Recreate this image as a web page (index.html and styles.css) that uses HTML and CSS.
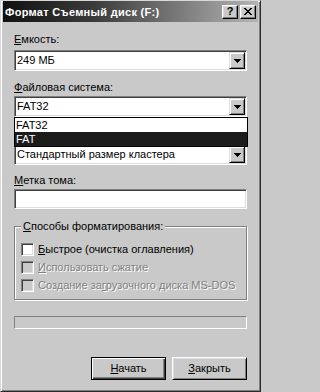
FILE: index.html
```html
<!DOCTYPE html>
<html lang="ru">
<head>
<meta charset="utf-8">
<title>Формат Съемный диск (F:)</title>
<link rel="stylesheet" href="styles.css">
</head>
<body>
<div class="window">
  <div class="titlebar">
    <span class="title">Формат Съемный диск (F:)</span>
    <div class="caption-buttons">
      <div class="cap-btn help">?</div>
      <div class="cap-btn close">
        <svg width="8" height="7" viewBox="0 0 8 7" shape-rendering="crispEdges"><path d="M0 0h2v1H0zM6 0h2v1H6zM1 1h2v1H1zM5 1h2v1H5zM2 2h4v1H2zM3 3h2v1H3zM2 4h4v1H2zM1 5h2v1H1zM5 5h2v1H5zM0 6h2v1H0zM6 6h2v1H6z"/></svg>
      </div>
    </div>
  </div>
  <div class="content">
    <div class="label l1"><u>Е</u>мкость:</div>
    <div class="combo c1">
      <span class="combo-text">249 МБ</span>
      <span class="drop"><svg width="7" height="4" viewBox="0 0 7 4" shape-rendering="crispEdges"><path d="M0 0h7v1H0zM1 1h5v1H1zM2 2h3v1H2zM3 3h1v1H3z"/></svg></span>
    </div>
    <div class="label l2"><u>Ф</u>айловая система:</div>
    <div class="combo-wrap">
      <div class="combo c2">
        <span class="combo-text">FAT32</span>
        <span class="drop"><svg width="7" height="4" viewBox="0 0 7 4" shape-rendering="crispEdges"><path d="M0 0h7v1H0zM1 1h5v1H1zM2 2h3v1H2zM3 3h1v1H3z"/></svg></span>
      </div>
      <div class="dropdown-list">
        <div class="item">FAT32</div>
        <div class="item selected">FAT</div>
      </div>
    </div>
    <div class="label-spacer"></div>
    <div class="combo c3">
      <span class="combo-text">Стандартный размер кластера</span>
      <span class="drop"><svg width="7" height="4" viewBox="0 0 7 4" shape-rendering="crispEdges"><path d="M0 0h7v1H0zM1 1h5v1H1zM2 2h3v1H2zM3 3h1v1H3z"/></svg></span>
    </div>
    <div class="label l4"><u>М</u>етка тома:</div>
    <div class="textbox"></div>
    <fieldset class="group">
      <legend><u>С</u>пособы форматирования:</legend>
      <div class="check-row"><span class="checkbox"></span><span class="check-label"><u>Б</u>ыстрое (очистка оглавления)</span></div>
      <div class="check-row disabled"><span class="checkbox"></span><span class="check-label"><u>И</u>спользовать сжатие</span></div>
      <div class="check-row disabled"><span class="checkbox"></span><span class="check-label">Создание за<u>г</u>рузочного диска MS-DOS</span></div>
    </fieldset>
    <div class="progress"></div>
    <div class="buttons">
      <div class="btn default"><u>Н</u>ачать</div>
      <div class="btn"><u>З</u>акрыть</div>
    </div>
  </div>
</div>
</body>
</html>
```

FILE: styles.css
```css
* { box-sizing: border-box; }
html, body { margin: 0; padding: 0; }
body {
  width: 261px;
  height: 392px;
  overflow: hidden;
  background: #c9c9c9;
  font-family: "Liberation Sans", Arial, sans-serif;
  font-size: 11px;
  color: #000;
}
u { text-decoration: underline; text-underline-offset: 1px; }

.window {
  width: 261px;
  height: 392px;
  display: flex;
  flex-direction: column;
  background: #c9c9c9;
  border: 1px solid;
  border-color: #d8d8d8 #2a2a2a #2a2a2a #d8d8d8;
  padding: 0 2px 2px 2px;
  box-shadow: inset 1px 1px #fff, inset -1px -1px #808080;
}

.titlebar {
  height: 21px;
  flex: none;
  display: flex;
  align-items: center;
  justify-content: space-between;
  padding: 0 2px;
  background: linear-gradient(to right, #111 0%, #3a3a3a 35%, #b4b4b4 100%);
}
.title {
  color: #fff;
  font-weight: bold;
  font-size: 11px;
  letter-spacing: 0.3px;
  line-height: 13px;
  padding-top: 1px;
  white-space: nowrap;
}
.caption-buttons { display: flex; gap: 2px; }
.cap-btn {
  width: 16px;
  height: 14px;
  display: flex;
  align-items: center;
  justify-content: center;
  background: #c9c9c9;
  border: 1px solid;
  border-color: #fff #000 #000 #fff;
  box-shadow: inset -1px -1px #808080, inset 1px 1px #dcdcdc;
}
.cap-btn.help {
  font-weight: bold;
  font-size: 11px;
  line-height: 11px;
}

.content {
  flex: 1;
  display: flex;
  flex-direction: column;
  padding: 0 11px;
}

.label { line-height: 13px; white-space: nowrap; }
.l1 { margin-top: 11px; }
.l2 { margin-top: 10px; }
.label-spacer { height: 13px; margin-top: 10px; }
.l4 { margin-top: 9px; }

.combo {
  height: 21px;
  display: flex;
  align-items: center;
  background: #fff;
  border: 1px solid;
  border-color: #808080 #fff #fff #808080;
  box-shadow: inset 1px 1px #404040, inset -1px -1px #dcdcdc;
  padding: 1px;
}
.c1 { margin-top: 4px; }
.c2 { margin-top: 0; }
.c3 { margin-top: 4px; }
.combo-wrap { position: relative; margin-top: 2px; }
.combo-text { flex: 1; padding-left: 1px; white-space: nowrap; line-height: 13px; }
.drop {
  width: 16px;
  height: 17px;
  display: flex;
  align-items: center;
  justify-content: center;
  background: #c9c9c9;
  border: 1px solid;
  border-color: #dcdcdc #000 #000 #dcdcdc;
  box-shadow: inset 1px 1px #fff, inset -1px -1px #808080;
}
.drop svg { margin-top: 1px; }

.dropdown-list {
  position: absolute;
  top: 100%;
  left: 0;
  right: -1px;
  z-index: 2;
  background: #fff;
  border: 1px solid #000;
}
.item { height: 14px; line-height: 14px; padding-left: 1px; }
.item.selected { background: #1c1c1c; color: #fff; }

.textbox {
  margin-top: 2px;
  height: 20px;
  background: #fff;
  border: 1px solid;
  border-color: #808080 #fff #fff #808080;
  box-shadow: inset 1px 1px #404040, inset -1px -1px #dcdcdc;
}

.group {
  margin: 10px 0 0 0;
  padding: 7px 6px 5px 6px;
  border: 1px solid #808080;
  box-shadow: inset 1px 1px #fff, 1px 1px #fff;
  min-width: 0;
}
.group legend {
  padding: 0 2px;
  line-height: 14px;
  background: #c9c9c9;
  white-space: nowrap;
}
.check-row {
  height: 18px;
  display: flex;
  align-items: center;
}
.checkbox {
  flex: none;
  width: 13px;
  height: 13px;
  margin-right: 4px;
  background: #fff;
  border: 1px solid;
  border-color: #808080 #fff #fff #808080;
  box-shadow: inset 1px 1px #404040, inset -1px -1px #dcdcdc;
}
.check-label { white-space: nowrap; line-height: 13px; }
.check-row.disabled .checkbox { background: #c9c9c9; }
.check-row.disabled .check-label { color: #808080; text-shadow: 1px 1px #fff; }

.progress {
  margin-top: 16px;
  height: 13px;
  border: 1px solid;
  border-color: #808080 #fff #fff #808080;
}

.buttons {
  margin-top: 28px;
  display: flex;
  justify-content: flex-end;
  gap: 6px;
}
.btn {
  width: 75px;
  height: 23px;
  display: flex;
  align-items: center;
  justify-content: center;
  background: #c9c9c9;
  border: 1px solid;
  border-color: #fff #000 #000 #fff;
  box-shadow: inset 1px 1px #dcdcdc, inset -1px -1px #808080;
  line-height: 13px;
}
.btn.default {
  border: 1px solid #000;
  box-shadow: inset 1px 1px #fff, inset -1px -1px #404040, inset -2px -2px #808080;
}
```
